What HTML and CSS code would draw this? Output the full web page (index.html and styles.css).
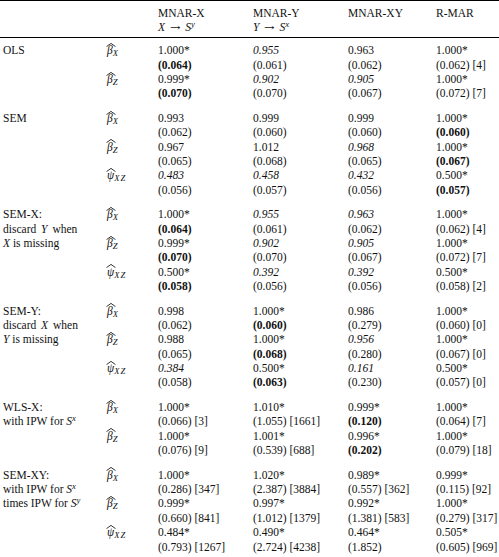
FILE: index.html
```html
<!DOCTYPE html>
<html lang="en">
  <head>
    <meta charset="UTF-8" />
    <meta name="viewport" content="width=device-width, initial-scale=1.0" />
    <title>Simulation results</title>
    <link rel="stylesheet" href="styles.css">
  </head>
  <body>
    <table class="results">
      <colgroup>
        <col class="c-label" />
        <col class="c-sym" />
        <col class="c-wide" />
        <col class="c-wide" />
        <col class="c-mid" />
        <col class="c-last" />
      </colgroup>
      <thead>
        <tr>
          <th></th>
          <th></th>
          <th>MNAR-X<br /><i>X</i> <span class="arrow">→</span> <i>S</i><sup>y</sup></th>
          <th>MNAR-Y<br /><i>Y</i> <span class="arrow">→</span> <i>S</i><sup>x</sup></th>
          <th>MNAR-XY</th>
          <th>R-MAR</th>
        </tr>
      </thead>

      <!-- OLS -->
      <tbody class="block">
        <tr>
          <td class="label">OLS</td>
          <td class="sym"><span class="hat">β<svg viewBox="0 0 10 4"><polyline points="0.5,3.6 5,0.4 9.5,3.6" /></svg></span><sub>X</sub></td>
          <td>1.000*</td><td><i>0.955</i></td><td>0.963</td><td>1.000*</td>
        </tr>
        <tr>
          <td class="label"></td><td></td>
          <td><b>(0.064)</b></td><td>(0.061)</td><td>(0.062)</td><td>(0.062) [4]</td>
        </tr>
        <tr>
          <td class="label"></td>
          <td class="sym"><span class="hat">β<svg viewBox="0 0 10 4"><polyline points="0.5,3.6 5,0.4 9.5,3.6" /></svg></span><sub>Z</sub></td>
          <td>0.999*</td><td><i>0.902</i></td><td><i>0.905</i></td><td>1.000*</td>
        </tr>
        <tr>
          <td class="label"></td><td></td>
          <td><b>(0.070)</b></td><td>(0.070)</td><td>(0.067)</td><td>(0.072) [7]</td>
        </tr>
      </tbody>

      <!-- SEM -->
      <tbody class="block">
        <tr>
          <td class="label">SEM</td>
          <td class="sym"><span class="hat">β<svg viewBox="0 0 10 4"><polyline points="0.5,3.6 5,0.4 9.5,3.6" /></svg></span><sub>X</sub></td>
          <td>0.993</td><td>0.999</td><td>0.999</td><td>1.000*</td>
        </tr>
        <tr>
          <td class="label"></td><td></td>
          <td>(0.062)</td><td>(0.060)</td><td>(0.060)</td><td><b>(0.060)</b></td>
        </tr>
        <tr>
          <td class="label"></td>
          <td class="sym"><span class="hat">β<svg viewBox="0 0 10 4"><polyline points="0.5,3.6 5,0.4 9.5,3.6" /></svg></span><sub>Z</sub></td>
          <td>0.967</td><td>1.012</td><td><i>0.968</i></td><td>1.000*</td>
        </tr>
        <tr>
          <td class="label"></td><td></td>
          <td>(0.065)</td><td>(0.068)</td><td>(0.065)</td><td><b>(0.067)</b></td>
        </tr>
        <tr>
          <td class="label"></td>
          <td class="sym"><span class="hat">ψ<svg viewBox="0 0 10 4"><polyline points="0.5,3.6 5,0.4 9.5,3.6" /></svg></span><sub>XZ</sub></td>
          <td><i>0.483</i></td><td><i>0.458</i></td><td><i>0.432</i></td><td>0.500*</td>
        </tr>
        <tr>
          <td class="label"></td><td></td>
          <td>(0.056)</td><td>(0.057)</td><td>(0.056)</td><td><b>(0.057)</b></td>
        </tr>
      </tbody>

      <!-- SEM-X -->
      <tbody class="block">
        <tr>
          <td class="label">SEM-X:</td>
          <td class="sym"><span class="hat">β<svg viewBox="0 0 10 4"><polyline points="0.5,3.6 5,0.4 9.5,3.6" /></svg></span><sub>X</sub></td>
          <td>1.000*</td><td><i>0.955</i></td><td><i>0.963</i></td><td>1.000*</td>
        </tr>
        <tr>
          <td class="label">discard <i class="var">Y</i> when</td><td></td>
          <td><b>(0.064)</b></td><td>(0.061)</td><td>(0.062)</td><td>(0.062) [4]</td>
        </tr>
        <tr>
          <td class="label"><i>X</i> is missing</td>
          <td class="sym"><span class="hat">β<svg viewBox="0 0 10 4"><polyline points="0.5,3.6 5,0.4 9.5,3.6" /></svg></span><sub>Z</sub></td>
          <td>0.999*</td><td><i>0.902</i></td><td><i>0.905</i></td><td>1.000*</td>
        </tr>
        <tr>
          <td class="label"></td><td></td>
          <td><b>(0.070)</b></td><td>(0.070)</td><td>(0.067)</td><td>(0.072) [7]</td>
        </tr>
        <tr>
          <td class="label"></td>
          <td class="sym"><span class="hat">ψ<svg viewBox="0 0 10 4"><polyline points="0.5,3.6 5,0.4 9.5,3.6" /></svg></span><sub>XZ</sub></td>
          <td>0.500*</td><td><i>0.392</i></td><td><i>0.392</i></td><td>0.500*</td>
        </tr>
        <tr>
          <td class="label"></td><td></td>
          <td><b>(0.058)</b></td><td>(0.056)</td><td>(0.056)</td><td>(0.058) [2]</td>
        </tr>
      </tbody>

      <!-- SEM-Y -->
      <tbody class="block">
        <tr>
          <td class="label">SEM-Y:</td>
          <td class="sym"><span class="hat">β<svg viewBox="0 0 10 4"><polyline points="0.5,3.6 5,0.4 9.5,3.6" /></svg></span><sub>X</sub></td>
          <td>0.998</td><td>1.000*</td><td>0.986</td><td>1.000*</td>
        </tr>
        <tr>
          <td class="label">discard <i class="var">X</i> when</td><td></td>
          <td>(0.062)</td><td><b>(0.060)</b></td><td>(0.279)</td><td>(0.060) [0]</td>
        </tr>
        <tr>
          <td class="label"><i>Y</i> is missing</td>
          <td class="sym"><span class="hat">β<svg viewBox="0 0 10 4"><polyline points="0.5,3.6 5,0.4 9.5,3.6" /></svg></span><sub>Z</sub></td>
          <td>0.988</td><td>1.000*</td><td><i>0.956</i></td><td>1.000*</td>
        </tr>
        <tr>
          <td class="label"></td><td></td>
          <td>(0.065)</td><td><b>(0.068)</b></td><td>(0.280)</td><td>(0.067) [0]</td>
        </tr>
        <tr>
          <td class="label"></td>
          <td class="sym"><span class="hat">ψ<svg viewBox="0 0 10 4"><polyline points="0.5,3.6 5,0.4 9.5,3.6" /></svg></span><sub>XZ</sub></td>
          <td><i>0.384</i></td><td>0.500*</td><td><i>0.161</i></td><td>0.500*</td>
        </tr>
        <tr>
          <td class="label"></td><td></td>
          <td>(0.058)</td><td><b>(0.063)</b></td><td>(0.230)</td><td>(0.057) [0]</td>
        </tr>
      </tbody>

      <!-- WLS-X -->
      <tbody class="block">
        <tr>
          <td class="label">WLS-X:</td>
          <td class="sym"><span class="hat">β<svg viewBox="0 0 10 4"><polyline points="0.5,3.6 5,0.4 9.5,3.6" /></svg></span><sub>X</sub></td>
          <td>1.000*</td><td>1.010*</td><td>0.999*</td><td>1.000*</td>
        </tr>
        <tr>
          <td class="label">with IPW for <i>S</i><sup>x</sup></td><td></td>
          <td>(0.066) [3]</td><td>(1.055) [1661]</td><td><b>(0.120)</b></td><td>(0.064) [7]</td>
        </tr>
        <tr>
          <td class="label"></td>
          <td class="sym"><span class="hat">β<svg viewBox="0 0 10 4"><polyline points="0.5,3.6 5,0.4 9.5,3.6" /></svg></span><sub>Z</sub></td>
          <td>1.000*</td><td>1.001*</td><td>0.996*</td><td>1.000*</td>
        </tr>
        <tr>
          <td class="label"></td><td></td>
          <td>(0.076) [9]</td><td>(0.539) [688]</td><td><b>(0.202)</b></td><td>(0.079) [18]</td>
        </tr>
      </tbody>

      <!-- SEM-XY -->
      <tbody class="block">
        <tr>
          <td class="label">SEM-XY:</td>
          <td class="sym"><span class="hat">β<svg viewBox="0 0 10 4"><polyline points="0.5,3.6 5,0.4 9.5,3.6" /></svg></span><sub>X</sub></td>
          <td>1.000*</td><td>1.020*</td><td>0.989*</td><td>0.999*</td>
        </tr>
        <tr>
          <td class="label">with IPW for <i>S</i><sup>x</sup></td><td></td>
          <td>(0.286) [347]</td><td>(2.387) [3884]</td><td>(0.557) [362]</td><td>(0.115) [92]</td>
        </tr>
        <tr>
          <td class="label">times IPW for <i>S</i><sup>y</sup></td>
          <td class="sym"><span class="hat">β<svg viewBox="0 0 10 4"><polyline points="0.5,3.6 5,0.4 9.5,3.6" /></svg></span><sub>Z</sub></td>
          <td>0.999*</td><td>0.997*</td><td>0.992*</td><td>1.000*</td>
        </tr>
        <tr>
          <td class="label"></td><td></td>
          <td>(0.660) [841]</td><td>(1.012) [1379]</td><td>(1.381) [583]</td><td>(0.279) [317]</td>
        </tr>
        <tr>
          <td class="label"></td>
          <td class="sym"><span class="hat">ψ<svg viewBox="0 0 10 4"><polyline points="0.5,3.6 5,0.4 9.5,3.6" /></svg></span><sub>XZ</sub></td>
          <td>0.484*</td><td>0.490*</td><td>0.464*</td><td>0.505*</td>
        </tr>
        <tr>
          <td class="label"></td><td></td>
          <td>(0.793) [1267]</td><td>(2.724) [4238]</td><td>(1.852)</td><td>(0.605) [969]</td>
        </tr>
      </tbody>
    </table>
  </body>
</html>
```

FILE: styles.css
```css
body {
  margin: 0;
  background: #fff;
  color: #111;
  font-family: "Liberation Serif", "Times New Roman", serif;
  font-size: 11.5px;
}

.results {
  width: 499px;
  border-collapse: collapse;
  table-layout: fixed;
  border-top: 1px solid #000;
  border-bottom: 2px solid #000;
}

.c-label {
  width: 107px;
}

.c-sym {
  width: 51px;
}

.c-wide {
  width: 95px;
}

.c-mid {
  width: 88px;
}

.c-last {
  width: 63px;
}

.results th,
.results td {
  padding: 0;
  text-align: left;
  font-weight: normal;
  line-height: 14.35px;
  white-space: nowrap;
  vertical-align: baseline;
}

.results thead th {
  padding-top: 5px;
  padding-bottom: 1px;
  border-bottom: 1px solid #000;
}

.results td.label {
  padding-left: 3px;
}

.block tr:first-child td {
  padding-top: 10.3px;
}

.block:first-of-type tr:first-child td {
  padding-top: 5.7px;
}

.block:last-child tr:last-child td {
  padding-bottom: 3px;
}

.var {
  margin: 0 2px;
}

.arrow {
  display: inline-block;
  margin: 0 3px;
  font-family: "DejaVu Serif", serif;
  font-size: 10px;
  transform: scaleX(1.25);
}

sub,
sup {
  font-size: 8.6px;
  font-style: italic;
  line-height: 0;
}

sub {
  vertical-align: -2px;
}

sup {
  vertical-align: 4px;
}

.sym {
  font-style: italic;
}

.sym sub {
  letter-spacing: 1px;
}

.hat {
  position: relative;
}

.hat svg {
  position: absolute;
  left: -1px;
  top: -1.5px;
  width: 10px;
  height: 4px;
  fill: none;
  stroke: #000;
  stroke-width: 0.8;
}
```
